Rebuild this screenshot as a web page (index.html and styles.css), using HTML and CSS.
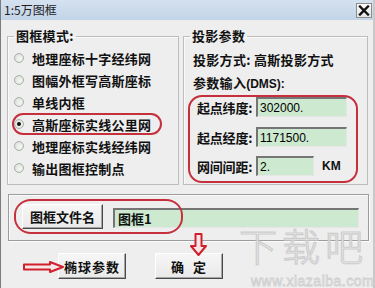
FILE: index.html
```html
<!DOCTYPE html>
<html lang="zh">
<head>
<meta charset="utf-8">
<link rel="stylesheet" href="styles.css">
</head>
<body>
<div class="window">
  <div class="titlebar">
    <span class="title">1:5万图框</span>
    <span class="close"><svg width="12" height="11" viewBox="0 0 12 11"><path d="M2 1.5 L10 9.5 M10 1.5 L2 9.5" stroke="#111" stroke-width="2.4" stroke-linecap="square"/></svg></span>
  </div>
  <div class="groups">
    <fieldset class="group mode">
      <legend>图框模式:</legend>
      <div class="options">
        <div class="opt"><span class="radio"></span>地理座标十字经纬网</div>
        <div class="opt"><span class="radio"></span>图幅外框写高斯座标</div>
        <div class="opt"><span class="radio"></span>单线内框</div>
        <div class="opt sel"><span class="radio on"></span>高斯座标实线公里网</div>
        <div class="opt"><span class="radio"></span>地理座标实线经纬网</div>
        <div class="opt"><span class="radio"></span>输出图框控制点</div>
      </div>
    </fieldset>
    <fieldset class="group proj">
      <legend>投影参数</legend>
      <div class="line first">投影方式: 高斯投影方式</div>
      <div class="line">参数输入<span class="latin">(DMS):</span></div>
      <div class="params">
        <div class="prow"><span class="plabel">起点纬度:</span><span class="field num">302000.</span></div>
        <div class="prow"><span class="plabel">起点经度:</span><span class="field num">1171500.</span></div>
        <div class="prow"><span class="plabel">网间间距:</span><span class="field num short">2.</span><span class="unit">KM</span></div>
      </div>
    </fieldset>
  </div>
  <div class="namebox">
    <span class="btn namebtn">图框文件名</span>
    <span class="field wide">图框1</span>
    <span class="mark-ellipse"></span>
  </div>
  <div class="actions">
    <span class="btn act">椭球参数</span>
    <span class="btn act ok">确 定</span>
  </div>
  <svg class="arrow-right" width="41" height="12" viewBox="0 0 41 12"><polygon points="1,3.5 27,3.5 27,1 40,6 27,11 27,8.5 1,8.5" fill="#f6e6e6" stroke="#d0202e" stroke-width="2" stroke-linejoin="round"/></svg>
  <svg class="arrow-down" width="17" height="23" viewBox="0 0 17 23"><polygon points="5.5,1 11.5,1 11.5,13 16,13 8.5,22 1,13 5.5,13" fill="#f6e6e6" stroke="#d0202e" stroke-width="2" stroke-linejoin="round"/></svg>
  <div class="watermark">
    <div class="wm-big">下载吧</div>
    <div class="wm-small">www.xiazaiba.com</div>
  </div>
</div>
</body>
</html>
```

FILE: styles.css
```css
html, body {
  margin: 0;
  padding: 0;
}
body {
  width: 375px;
  height: 288px;
  overflow: hidden;
  background: #eeeeee;
  font-family: "Noto Sans CJK SC", "Liberation Sans", sans-serif;
  color: #111;
}
.window {
  position: relative;
  box-sizing: border-box;
  width: 375px;
  height: 288px;
  border-left: 1px solid #7c7c7c;
  border-right: 2px solid #c9c9c9;
  background: #eeeeee;
}
.titlebar {
  height: 20px;
  display: flex;
  align-items: center;
  justify-content: space-between;
  padding: 0 1px 0 3px;
  background: linear-gradient(#d4e1ef, #c3d4e8);
}
.title {
  font-size: 12px;
  line-height: 14px;
  color: #1e1e1e;
}
.close {
  width: 16px;
  height: 15px;
  box-sizing: border-box;
  display: flex;
  align-items: center;
  justify-content: center;
  background: linear-gradient(#fbfbfb, #e4e4e4);
  border: 1px solid #8c8c8c;
  margin-top: 1px;
}
.groups {
  display: flex;
  gap: 4px;
  margin-top: 9px;
  padding-left: 6px;
}
.group {
  box-sizing: border-box;
  margin: 0;
  padding: 0;
  height: 156px;
  border: 1px solid #bdbdbd;
  box-shadow: inset 1px 1px #fafafa;
}
.group legend {
  margin-left: 6px;
  padding: 0 2px;
  font-size: 13px;
  line-height: 14px;
  font-weight: 700;
  letter-spacing: 0.3px;
}
.mode {
  width: 172px;
}
.proj {
  width: 185px;
}
.options {
  padding-top: 4px;
  margin-left: 4px;
}
.opt {
  height: 22px;
  box-sizing: border-box;
  display: flex;
  align-items: center;
  padding-left: 2px;
  font-size: 13px;
  font-weight: 700;
  letter-spacing: 0.25px;
  white-space: nowrap;
}
.opt.sel {
  width: 150px;
  border-radius: 11px;
  box-shadow: inset 0 0 0 2px #c5303c;
}
.radio {
  width: 10px;
  height: 10px;
  box-sizing: border-box;
  border-radius: 50%;
  border: 1px solid #a9b0a9;
  background: radial-gradient(circle at 60% 60%, #f6f8f4, #d2dad0);
  margin-right: 8px;
  flex: none;
  display: flex;
  align-items: center;
  justify-content: center;
}
.radio.on::after {
  content: "";
  width: 4px;
  height: 4px;
  border-radius: 50%;
  background: #111;
}
.line {
  height: 18px;
  line-height: 18px;
  padding-left: 9px;
  font-size: 13px;
  font-weight: 700;
  letter-spacing: 0.3px;
  white-space: nowrap;
}
.line.first {
  margin-top: 8px;
  margin-bottom: 5px;
}
.latin {
  font-family: "Liberation Sans", sans-serif;
  font-weight: 700;
  font-size: 12px;
  letter-spacing: 0;
}
.params {
  box-sizing: border-box;
  width: 170px;
  height: 88px;
  margin: 3px 0 0 4px;
  border: 2px solid #c5303c;
  border-radius: 14px;
  padding: 0 0 0 7px;
  display: flex;
  flex-direction: column;
  gap: 10px;
}
.prow {
  display: flex;
  align-items: center;
  height: 20px;
}
.prow:last-child {
  margin-top: -1px;
}
.plabel {
  width: 59px;
  font-size: 13px;
  font-weight: 700;
  letter-spacing: -0.2px;
  white-space: nowrap;
}
.field {
  box-sizing: border-box;
  height: 20px;
  display: flex;
  align-items: center;
  padding-left: 2px;
  background: #cde9cf;
  border-style: solid;
  border-width: 2px 1px 1px 2px;
  border-color: #757575 #e6e6e6 #e6e6e6 #757575;
  white-space: nowrap;
}
.num {
  width: 91px;
  font-family: "Liberation Sans", sans-serif;
  font-size: 12px;
  color: #000;
}
.num.short {
  width: 58px;
}
.unit {
  margin-left: 8px;
  font-family: "Liberation Sans", sans-serif;
  font-weight: 700;
  font-size: 12px;
}
.namebox {
  position: relative;
  box-sizing: border-box;
  width: 361px;
  height: 47px;
  margin: 9px 0 0 7px;
  border: 1px solid #9c9c9c;
  box-shadow: inset 1px 1px #fbfbfb, 1px 1px #fbfbfb;
  display: flex;
  align-items: center;
  padding-left: 13px;
  gap: 10px;
}
.btn {
  box-sizing: border-box;
  display: flex;
  align-items: center;
  justify-content: center;
  background: linear-gradient(#f6f6f6, #e9e9e9);
  border: 1px solid;
  border-color: #ffffff #4a4a4a #4a4a4a #ffffff;
  box-shadow: inset -1px -1px #a5a5a5;
  font-size: 13px;
  font-weight: 700;
  white-space: nowrap;
}
.namebtn {
  width: 81px;
  height: 25px;
  margin-top: -3px;
}
.field.wide {
  width: 246px;
  font-size: 13px;
  font-weight: 700;
  padding-left: 3px;
}
.mark-ellipse {
  position: absolute;
  left: 5px;
  top: 4px;
  width: 169px;
  height: 35px;
  box-sizing: border-box;
  border: 2px solid #c5303c;
  border-radius: 17px / 16px;
}
.actions {
  display: flex;
  gap: 29px;
  margin-top: 12px;
  padding-left: 57px;
}
.act {
  width: 68px;
  height: 26px;
  letter-spacing: 1px;
}
.ok {
  word-spacing: 4px;
}
.arrow-right {
  position: absolute;
  left: 22px;
  top: 261px;
}
.arrow-down {
  position: absolute;
  left: 189px;
  top: 233px;
}
.watermark {
  position: absolute;
  left: 238px;
  top: 217px;
  width: 136px;
  pointer-events: none;
}
.wm-big {
  font-size: 38px;
  line-height: 55px;
  height: 55px;
  letter-spacing: 5px;
  color: rgba(255, 255, 255, 0.35);
  -webkit-text-stroke: 1.2px #cdcdcd;
  font-weight: 300;
  white-space: nowrap;
}
.wm-small {
  margin-top: 1px;
  font-family: "Liberation Sans", sans-serif;
  font-size: 14px;
  line-height: 16px;
  color: rgba(255, 255, 255, 0.2);
  -webkit-text-stroke: 0.8px #cfcfcf;
  letter-spacing: 0.5px;
  padding-left: 12px;
  white-space: nowrap;
}
```
